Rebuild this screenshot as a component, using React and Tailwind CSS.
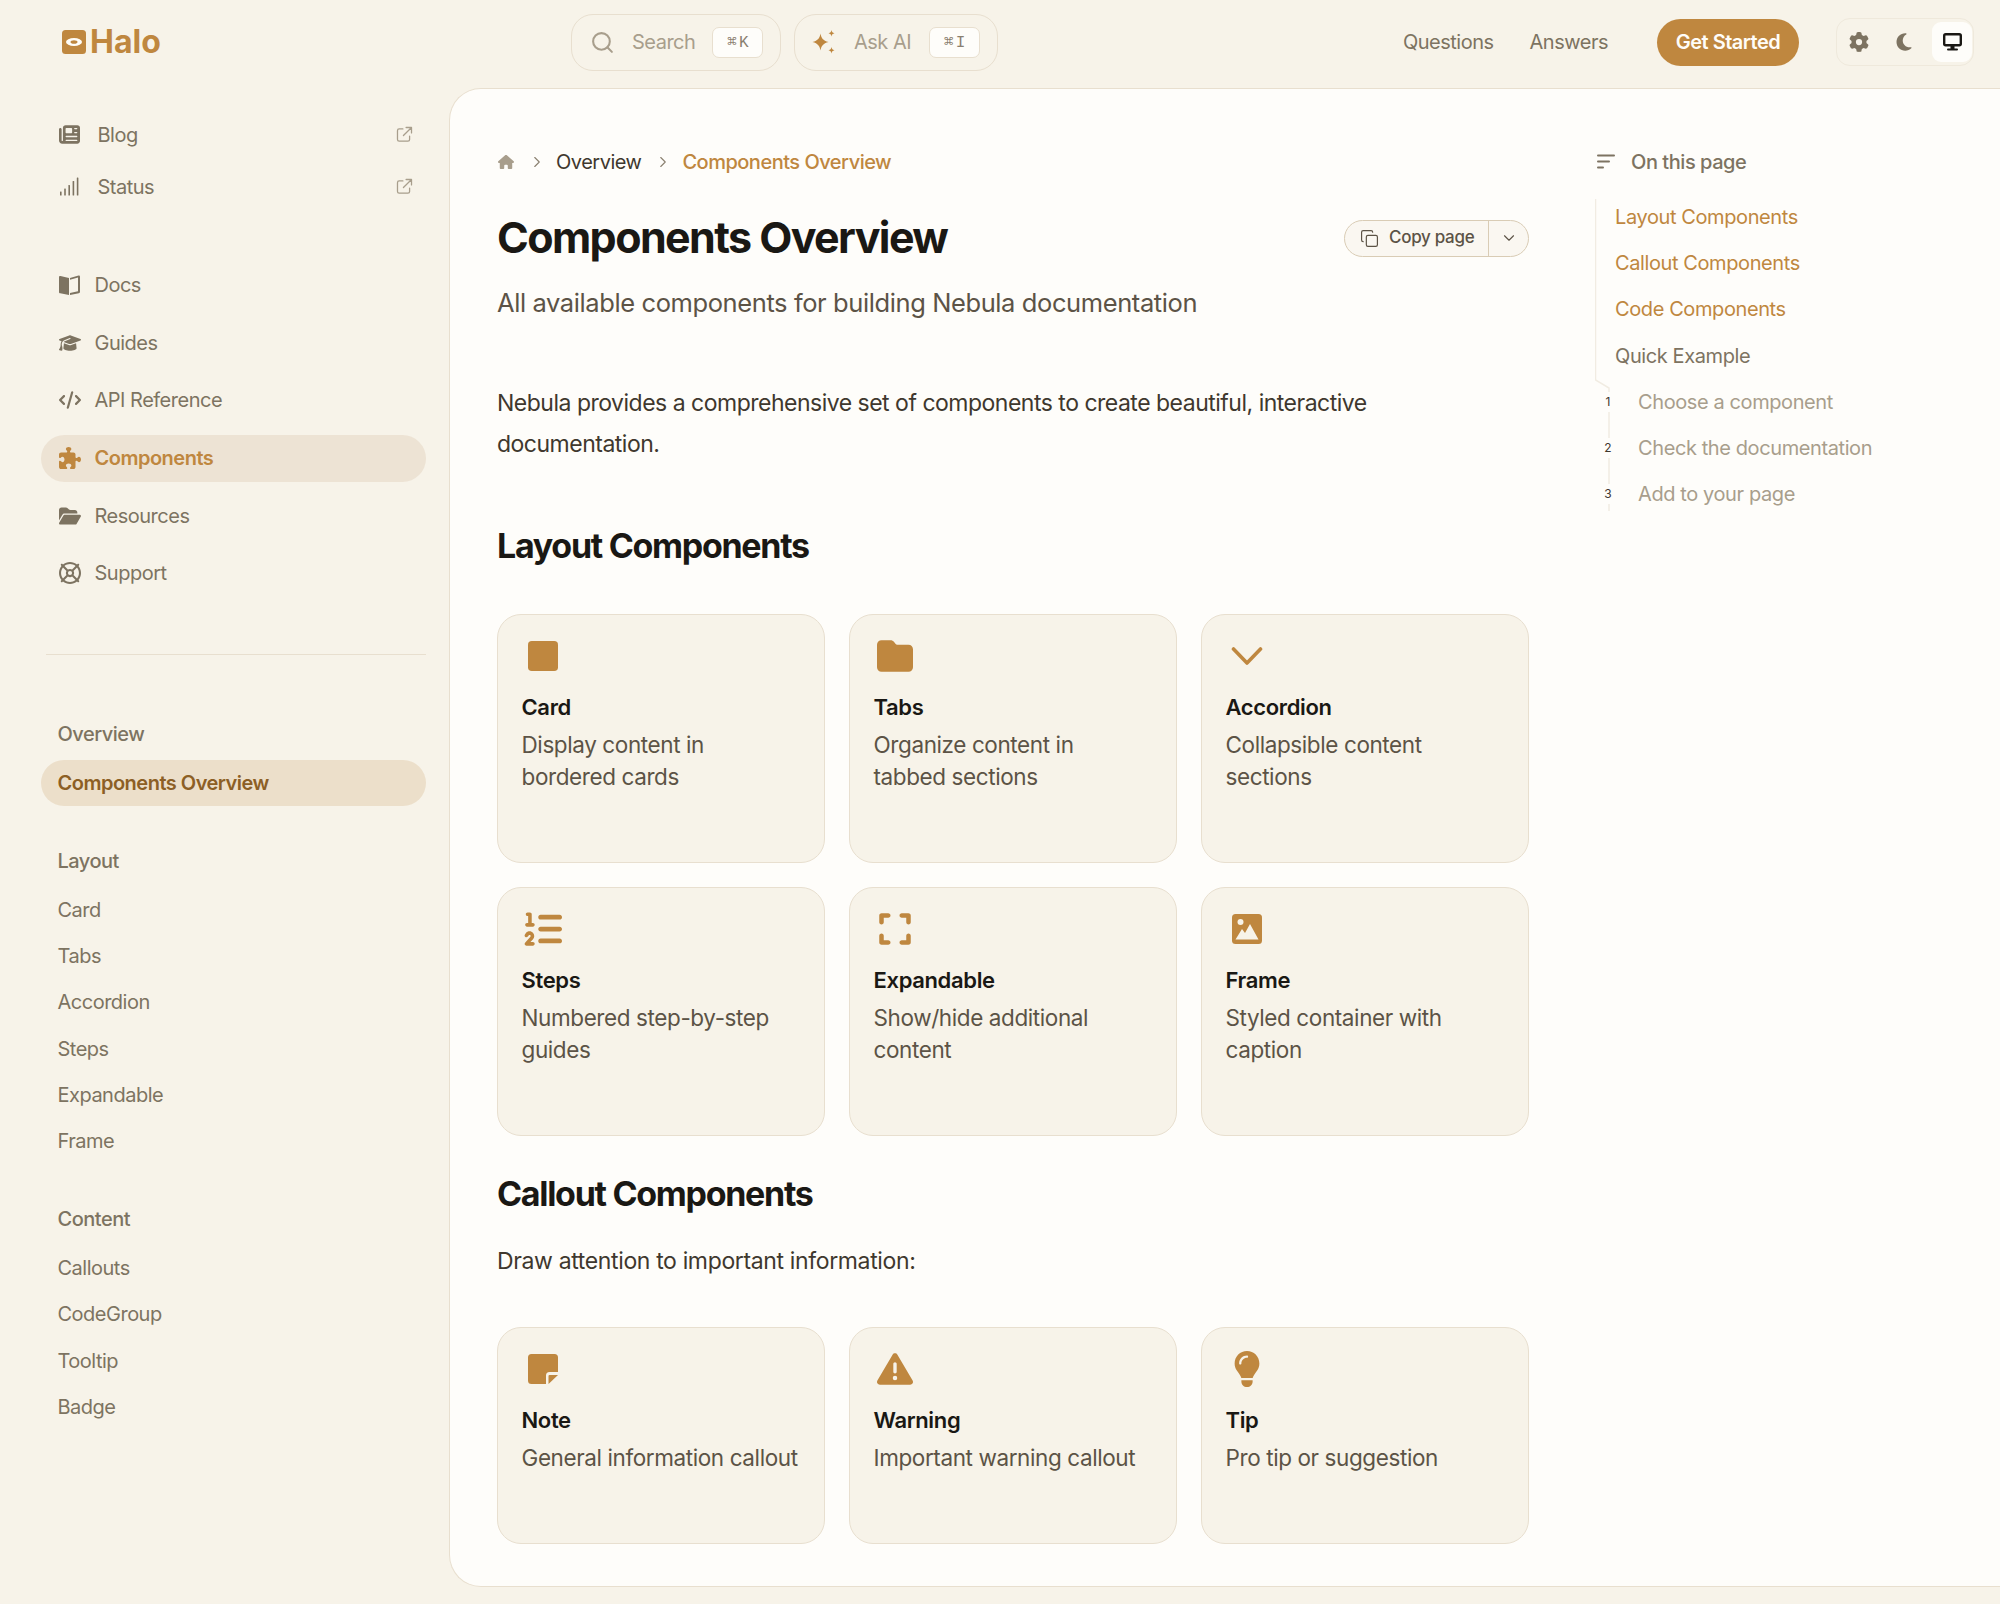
import React from "react";
import { FaNewspaper, FaGraduationCap, FaCode, FaPuzzlePiece, FaFolderOpen, FaRegLifeRing, FaFolder, FaListOl, FaExpand, FaTriangleExclamation, FaLightbulb, FaHouse, FaMoon, FaGear } from "react-icons/fa6";
import { Search, Copy, ChevronDown, ChevronRight } from "lucide-react";

const Ext = () => (
  <svg width="17" height="17" viewBox="0 0 16 16" fill="none" stroke="#a89e8c" strokeWidth="1.2" strokeLinecap="round" strokeLinejoin="round">
    <path d="M6.5 2.8H3a1.6 1.6 0 0 0-1.6 1.6v8.2A1.6 1.6 0 0 0 3 14.2h8.2a1.6 1.6 0 0 0 1.6-1.6V9.5" />
    <path d="M9.5 1.4h5.1v5.1M14.6 1.4 7 9" />
  </svg>
);
const Bars = () => (
  <svg width="21" height="19" viewBox="0 0 21 19" fill="#7d7361">
    <rect x="1" y="14.5" width="1.6" height="4" rx=".5" /><rect x="5.2" y="11.5" width="1.6" height="7" rx=".5" /><rect x="9.4" y="8" width="1.6" height="10.5" rx=".5" /><rect x="13.6" y="4" width="1.6" height="14.5" rx=".5" /><rect x="17.8" y="0.5" width="1.6" height="18" rx=".5" />
  </svg>
);
const BookIcon = () => (
  <svg width="21" height="20" viewBox="0 0 21 20" fill="#7d7361">
    <path d="M0 2.2C0 1.4.6.9 1.4 1L10 3v17L1.2 18.3C.5 18.1 0 17.6 0 16.9Z" />
    <path d="M11 3 19.6.6C20.3.4 21 1 21 1.8v15c0 .7-.5 1.3-1.2 1.5L11 20v-2l8-1.8V2.6L11 4.8Z" />
  </svg>
);
const Sparkle = () => (
  <svg width="25" height="24" viewBox="0 0 25 24" fill="#bf873f">
    <path d="M8.500 3.500c.7 4.500 2.500 7 8 8.500-5.500 1.500-7.300 4-8 8.500C7.800 16 6 13.500.5 12 6 10.500 7.800 8 8.500 3.500Z" />
    <path d="M19.500 0c.4 2 1 2.800 3 3.200-2 .4-2.600 1.200-3 3.300-.4-2.100-1-2.900-3-3.300 2-.4 2.600-1.200 3-3.200ZM19.500 17c.4 2 1 2.800 3 3.200-2 .4-2.600 1.200-3 3.300-.4-2.100-1-2.900-3-3.300 2-.4 2.600-1.200 3-3.200Z" />
  </svg>
);
const Logo = () => (
  <svg width="24" height="24" viewBox="0 0 24 24">
    <rect width="24" height="24" rx="3.500" fill="#bf873f" />
    <ellipse cx="12" cy="12" rx="8" ry="4" fill="#fffdf8" />
    <ellipse cx="12" cy="12" rx="3.500" ry="1.800" fill="#bf873f" />
  </svg>
);
const TocIcon = () => (
  <svg width="18" height="16" viewBox="0 0 18 16" fill="#7d7361">
    <rect x="0" y="0.500" width="18" height="2" rx="1" /><rect x="0" y="6.500" width="13" height="2" rx="1" /><rect x="0" y="12.500" width="7" height="2" rx="1" />
  </svg>
);
const Monitor = () => (
  <svg width="19" height="18" viewBox="0 0 19 18" fill="none">
    <rect x="1.200" y="1.200" width="16.600" height="11.100" rx="1.500" fill="#fefdfa" stroke="#1a1814" strokeWidth="2.400" />
    <path d="M7.500 13h4v2.500h-4ZM5 15.500h9a1 1 0 0 1 0 2H5a1 1 0 0 1 0-2Z" fill="#1a1814" />
  </svg>
);

const top = [
  [FaNewspaper, "Blog"],
  [Bars, "Status"],
];
const nav = [
  [BookIcon, "Docs"],
  [FaGraduationCap, "Guides"],
  [FaCode, "API Reference"],
  [FaPuzzlePiece, "Components", true],
  [FaFolderOpen, "Resources"],
  [FaRegLifeRing, "Support"],
];
const Group = ({ title, items }) => (
  <div className="mt-8 flex flex-col">
    <div className="h-[46px] flex items-center pl-[16.500px] text-[20px] font-medium text-[#7d7361] tracking-[-0.5px]">{title}</div>
    <div className="mt-[3px] flex flex-col">
      {items.map((i) => (
        <div key={i} className="h-[46.200px] flex items-center pl-[16.500px] text-[20px] text-[#7d7361] tracking-[-0.5px]">{i}</div>
      ))}
    </div>
  </div>
);

const Card = ({ Icon, size, title, lines, h }) => (
  <div className={`border border-[#e8dfcf] rounded-[24px] bg-[#f7f3e9] pl-[23.500px] pr-5 pt-[25px] ${h}`}>
    <div className="w-[42px] h-[32px] flex items-center justify-center text-[#bf873f]">
      <Icon size={size} />
    </div>
    <div className="mt-[19px] h-[32px] leading-[32px] text-[22px] font-semibold text-[#1a1814] tracking-[-0.35px]">{title}</div>
    <div className="mt-[6px] text-[22.500px] leading-[32px] text-[#5c5346] tracking-[-0.4px] whitespace-nowrap">
      {lines.map((l) => <div key={l}>{l}</div>)}
    </div>
  </div>
);
const Chev = ({ size }) => (
  <svg width={size} height={size} viewBox="0 0 32 32" fill="none" stroke="#bf873f" strokeWidth="3.600" strokeLinecap="round" strokeLinejoin="round"><path d="M2.500 9 16 23 29.500 9" /></svg>
);
const Rounded = ({ size }) => <svg width={size} height={size} viewBox="0 0 32 32" fill="#bf873f"><rect width="32" height="32" rx="4" /></svg>;
const FrameIcon = ({ size }) => (
  <svg width={size} height={size} viewBox="0 0 30 30">
    <rect width="30" height="30" rx="3.500" fill="#bf873f" />
    <circle cx="8.500" cy="8" r="3" fill="#f7f3e9" />
    <path d="M3.500 25.500 10 15l3 4 5-9 8.500 15.500Z" fill="#f7f3e9" />
  </svg>
);
const NoteIcon = ({ size }) => (
  <svg width={size} height={size} viewBox="0 0 30 30">
    <path d="M3.500 0h23A3.500 3.500 0 0 1 30 3.500V18h-8.500a3.500 3.500 0 0 0-3.500 3.500V30H3.500A3.500 3.500 0 0 1 0 26.500v-23A3.500 3.500 0 0 1 3.500 0Z" fill="#bf873f" />
    <path d="M20.500 30v-8a1 1 0 0 1 1-1H30Z" fill="#bf873f" />
  </svg>
);

export default function App() {
  return (
    <div className="min-h-[1604px] w-[2000px] bg-[#f7f3e9] [font-family:Inter,sans-serif] flex flex-col overflow-hidden">
      <header className="h-[88px] flex items-center shrink-0">
        <div className="w-[571px] pl-[62px] flex items-center gap-[4px] pb-[4px]">
          <Logo />
          <span className="text-[32px] font-bold text-[#bf873f] leading-none">Halo</span>
        </div>
        <div className="flex gap-[13px] mb-[4px]">
          <div className="w-[210px] h-[57px] border border-[#e8dfcf] rounded-[22px] flex items-center pl-[18px]">
            <Search size={25} className="text-[#a89e8c]" strokeWidth={2} />
            <span className="ml-[17px] text-[20px] text-[#a89e8c] tracking-[-0.5px]">Search</span>
            <span className="ml-[17px] w-[51px] h-[31px] pt-[1px] rounded-[7px] border border-[#e8dfcf] bg-[#fefdfa] flex items-center justify-center gap-[2px] text-[16px] text-[#8a8070] [font-family:'Liberation_Mono',monospace]">⌘<span>K</span></span>
          </div>
          <div className="w-[204px] h-[57px] border border-[#e8dfcf] rounded-[22px] flex items-center pl-[17px]">
            <Sparkle />
            <span className="ml-[17px] text-[20px] text-[#a89e8c] tracking-[-0.5px]">Ask AI</span>
            <span className="ml-[18px] w-[51px] h-[31px] pt-[1px] rounded-[7px] border border-[#e8dfcf] bg-[#fefdfa] flex items-center justify-center gap-[2px] text-[16px] text-[#8a8070] [font-family:'Liberation_Mono',monospace]">⌘<span>I</span></span>
          </div>
        </div>
        <div className="ml-auto flex items-center mb-[4px]">
          <span className="text-[20px] text-[#7d7361] tracking-[-0.5px]">Questions</span>
          <span className="ml-[36px] text-[20px] text-[#7d7361] tracking-[-0.5px]">Answers</span>
          <span className="ml-[49px] w-[142px] h-[47px] rounded-full bg-[#bf873f] text-[#fffdf8] text-[20px] font-semibold tracking-[-0.5px] flex items-center justify-center">Get Started</span>
          <div className="ml-[37px] mr-[26px] w-[138px] h-[48px] rounded-[14px] border border-[#efe9dc] flex items-center">
            <span className="w-[44px] flex justify-center text-[#7d7361]"><FaGear size={20} /></span>
            <span className="w-[46px] flex justify-center text-[#7d7361]"><FaMoon size={20} /></span>
            <span className="ml-[5px] w-[40px] h-[40px] rounded-[9px] bg-[#fefdfa] flex items-center justify-center"><Monitor /></span>
          </div>
        </div>
      </header>
      <div className="flex flex-1 pb-[17px]">
        <aside className="w-[449px] shrink-0 pl-[41px] pr-[23px] pt-[20.500px]">
          {top.map(([I, t]) => (
            <div key={t} className="h-[52px] flex items-center pl-[18px] pr-[13px] text-[#7d7361]">
              <span className="w-[24px] flex"><I size={21} /></span>
              <span className="ml-[14.500px] text-[20px] tracking-[-0.5px]">{t}</span>
              <span className="ml-auto"><Ext /></span>
            </div>
          ))}
          <div className="mt-[49px] flex flex-col gap-[10.700px]">
            {nav.map(([I, t, a]) => (
              <div key={t} className={`h-[47px] rounded-full flex items-center pl-[18px] ${a ? "bg-[#ede3d4] text-[#bf873f] font-semibold" : "text-[#7d7361]"}`}>
                <span className="w-[24px] flex"><I size={22} /></span>
                <span className="ml-[11.500px] text-[20px] tracking-[-0.5px]">{t}</span>
              </div>
            ))}
          </div>
          <div className="mt-[57px] ml-[5px] border-t border-[#e8dfcf]" />
          <div className="mt-[56px] h-[46px] flex items-center pl-[16.500px] text-[20px] font-medium text-[#7d7361] tracking-[-0.5px]">Overview</div>
          <div className="mt-[3px] h-[46px] rounded-full bg-[#ecdfca] flex items-center pl-[16.500px] text-[20px] font-semibold text-[#8c5f25] tracking-[-0.5px]">Components Overview</div>
          <Group title="Layout" items={["Card", "Tabs", "Accordion", "Steps", "Expandable", "Frame"]} />
          <Group title="Content" items={["Callouts", "CodeGroup", "Tooltip", "Badge"]} />
        </aside>
        <main className="flex-1 border border-r-0 border-[#e8dfcf] rounded-l-[32px] bg-[#fefdfa] pl-[47px] pt-[60px] flex">
          <div className="w-[1032px] shrink-0">
            <div className="h-[26px] flex items-center text-[20px] tracking-[-0.5px]">
              <FaHouse size={16} className="text-[#a89e8c] ml-[1px]" />
              <ChevronRight size={18} className="ml-[14px] text-[#8a8070]" strokeWidth={1.5} />
              <span className="ml-[10px] text-[#3f382e]">Overview</span>
              <ChevronRight size={18} className="ml-[13px] text-[#8a8070]" strokeWidth={1.5} />
              <span className="ml-[10px] text-[#bf873f] font-medium">Components Overview</span>
            </div>
            <div className="mt-[35px] h-[56px] flex items-center justify-between">
              <h1 className="pb-[2px] text-[43px] font-bold text-[#1a1814] tracking-[-1.6px] leading-none">Components Overview</h1>
              <div className="w-[185px] h-[37px] border border-[#d9ccb5] rounded-full bg-[#faf7f1] flex items-center text-[#5c5346]">
                <div className="w-[144px] h-full flex items-center pl-[15px] border-r border-[#d9ccb5]">
                  <Copy size={19} strokeWidth={1.5} />
                  <span className="ml-[10px] text-[17px] font-medium tracking-[-0.3px]">Copy page</span>
                </div>
                <div className="flex-1 flex justify-center"><ChevronDown size={18} strokeWidth={1.5} /></div>
              </div>
            </div>
            <p className="mt-[19px] h-[36px] leading-[36px] text-[25.500px] text-[#5c5346] tracking-[-0.4px] whitespace-nowrap">All available components for building Nebula documentation</p>
            <p className="mt-[62px] text-[23px] leading-[41px] text-[#3f382e] tracking-[-0.5px] whitespace-nowrap">Nebula provides a comprehensive set of components to create beautiful, interactive<br />documentation.</p>
            <h2 className="mt-[59px] h-[44px] leading-[44px] text-[34px] font-bold text-[#1a1814] tracking-[-1.3px]">Layout Components</h2>
            <div className="mt-[46px] grid grid-cols-3 gap-6">
              <Card Icon={Rounded} size={30} title="Card" lines={["Display content in", "bordered cards"]} h="h-[249px]" />
              <Card Icon={FaFolder} size={36} title="Tabs" lines={["Organize content in", "tabbed sections"]} h="h-[249px]" />
              <Card Icon={Chev} size={32} title="Accordion" lines={["Collapsible content", "sections"]} h="h-[249px]" />
              <Card Icon={FaListOl} size={38} title="Steps" lines={["Numbered step-by-step", "guides"]} h="h-[249px]" />
              <Card Icon={FaExpand} size={36} title="Expandable" lines={["Show/hide additional", "content"]} h="h-[249px]" />
              <Card Icon={FrameIcon} size={30} title="Frame" lines={["Styled container with", "caption"]} h="h-[249px]" />
            </div>
            <h2 className="mt-[36px] h-[44px] leading-[44px] text-[34px] font-bold text-[#1a1814] tracking-[-1.3px]">Callout Components</h2>
            <p className="mt-[25px] text-[23px] leading-[40px] text-[#3f382e] tracking-[-0.36px]">Draw attention to important information:</p>
            <div className="mt-[46px] grid grid-cols-3 gap-6">
              <Card Icon={NoteIcon} size={30} title="Note" lines={["General information callout"]} h="h-[217px]" />
              <Card Icon={FaTriangleExclamation} size={36} title="Warning" lines={["Important warning callout"]} h="h-[217px]" />
              <Card Icon={FaLightbulb} size={36} title="Tip" lines={["Pro tip or suggestion"]} h="h-[217px]" />
            </div>
          </div>
          <div className="ml-[66px] w-[340px]">
            <div className="h-[26px] flex items-center pl-[2px]">
              <TocIcon />
              <span className="ml-[16px] text-[20px] font-medium text-[#7d7361] tracking-[-0.45px]">On this page</span>
            </div>
            <div className="relative mt-[19px] pl-[20px] text-[20px] tracking-[-0.4px]">
              <svg className="absolute left-0 top-[5px]" width="20" height="312" fill="none" stroke="#f1ece2" strokeWidth="1.500"><path d="M.5 0V181L14 189V312" /></svg>
              <div className="h-[46.200px] flex items-center text-[#bf873f]">Layout Components</div>
              <div className="h-[46.200px] flex items-center text-[#bf873f]">Callout Components</div>
              <div className="h-[46.200px] flex items-center text-[#bf873f]">Code Components</div>
              <div className="h-[46.200px] flex items-center text-[#7d7361]">Quick Example</div>
              {["Choose a component", "Check the documentation", "Add to your page"].map((t, i) => (
                <div key={t} className="relative h-[46.200px] flex items-center pl-[23px] text-[#a89e8c]">
                  <span className="absolute left-[-13px] w-[12px] bg-[#fefdfa] text-center text-[12px] leading-[20px] text-[#3f382e] tracking-normal">{i + 1}</span>
                  {t}
                </div>
              ))}
            </div>
          </div>
        </main>
      </div>
    </div>
  );
}
